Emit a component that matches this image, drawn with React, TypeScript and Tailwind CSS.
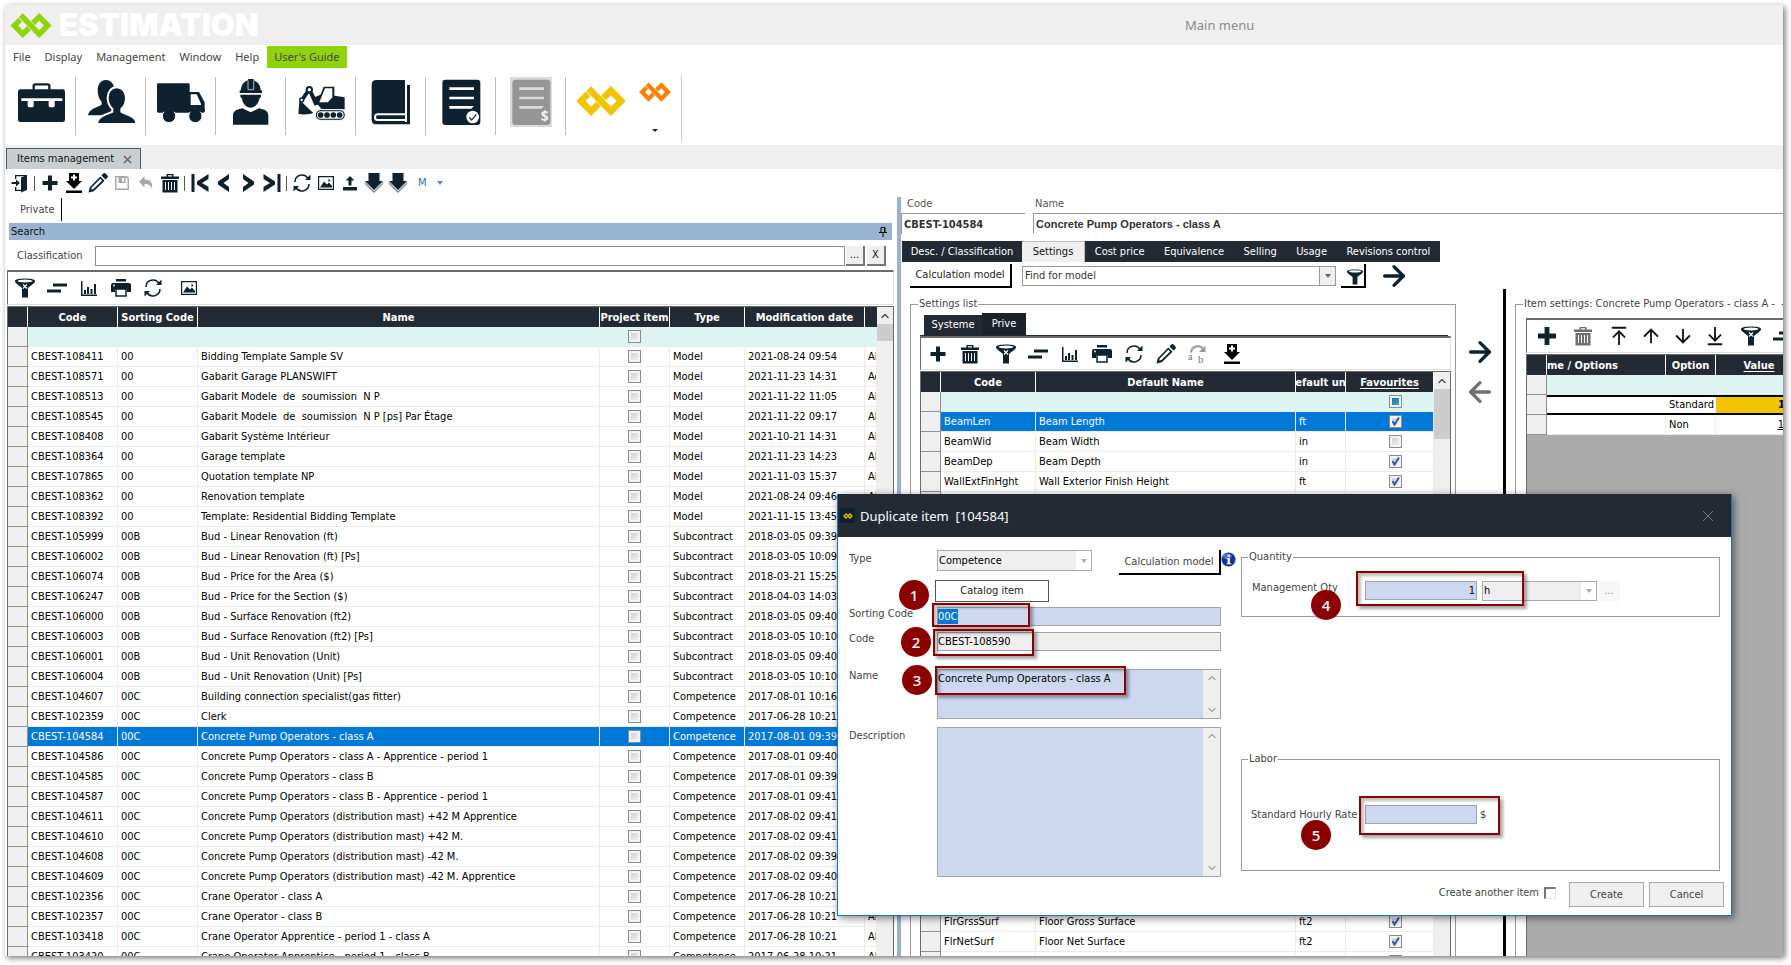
import React, { ReactNode } from 'react'
import { ArrowDown, ArrowDownToLine, ArrowLeft, ArrowRight, ArrowUp, ArrowUpToLine, ChevronDown, ChevronUp } from 'lucide-react'

const INK = '#0d222e'

type Row = [code: string, sorting: string, name: string, type: string, modified: string]

const items: Row[] = [
  ['CBEST-108411', '00', 'Bidding Template Sample SV', 'Model', '2021-08-24 09:54'],
  ['CBEST-108571', '00', 'Gabarit Garage PLANSWIFT', 'Model', '2021-11-23 14:31'],
  ['CBEST-108513', '00', 'Gabarit Modele  de  soumission  N P', 'Model', '2021-11-22 11:05'],
  ['CBEST-108545', '00', 'Gabarit Modele  de  soumission  N P [ps] Par Étage', 'Model', '2021-11-22 09:17'],
  ['CBEST-108408', '00', 'Gabarit Système Intérieur', 'Model', '2021-10-21 14:31'],
  ['CBEST-108364', '00', 'Garage template', 'Model', '2021-11-23 14:23'],
  ['CBEST-107865', '00', 'Quotation template NP', 'Model', '2021-11-03 15:37'],
  ['CBEST-108362', '00', 'Renovation template', 'Model', '2021-08-24 09:46'],
  ['CBEST-108392', '00', 'Template: Residential Bidding Template', 'Model', '2021-11-15 13:45'],
  ['CBEST-105999', '00B', 'Bud - Linear Renovation (ft)', 'Subcontract', '2018-03-05 09:39'],
  ['CBEST-106002', '00B', 'Bud - Linear Renovation (ft) [Ps]', 'Subcontract', '2018-03-05 10:09'],
  ['CBEST-106074', '00B', 'Bud - Price for the Area ($)', 'Subcontract', '2018-03-21 15:25'],
  ['CBEST-106247', '00B', 'Bud - Price for the Section ($)', 'Subcontract', '2018-04-03 14:03'],
  ['CBEST-106000', '00B', 'Bud - Surface Renovation (ft2)', 'Subcontract', '2018-03-05 09:40'],
  ['CBEST-106003', '00B', 'Bud - Surface Renovation (ft2) [Ps]', 'Subcontract', '2018-03-05 10:10'],
  ['CBEST-106001', '00B', 'Bud - Unit Renovation (Unit)', 'Subcontract', '2018-03-05 09:40'],
  ['CBEST-106004', '00B', 'Bud - Unit Renovation (Unit) [Ps]', 'Subcontract', '2018-03-05 10:10'],
  ['CBEST-104607', '00C', 'Building connection specialist(gas fitter)', 'Competence', '2017-08-01 10:16'],
  ['CBEST-102359', '00C', 'Clerk', 'Competence', '2017-06-28 10:21'],
  ['CBEST-104584', '00C', 'Concrete Pump Operators - class A', 'Competence', '2017-08-01 09:39'],
  ['CBEST-104586', '00C', 'Concrete Pump Operators - class A - Apprentice - period 1', 'Competence', '2017-08-01 09:40'],
  ['CBEST-104585', '00C', 'Concrete Pump Operators - class B', 'Competence', '2017-08-01 09:39'],
  ['CBEST-104587', '00C', 'Concrete Pump Operators - class B - Apprentice - period 1', 'Competence', '2017-08-01 09:41'],
  ['CBEST-104611', '00C', 'Concrete Pump Operators (distribution mast) +42 M Apprentice', 'Competence', '2017-08-02 09:41'],
  ['CBEST-104610', '00C', 'Concrete Pump Operators (distribution mast) +42 M.', 'Competence', '2017-08-02 09:41'],
  ['CBEST-104608', '00C', 'Concrete Pump Operators (distribution mast) -42 M.', 'Competence', '2017-08-02 09:39'],
  ['CBEST-104609', '00C', 'Concrete Pump Operators (distribution mast) -42 M. Apprentice', 'Competence', '2017-08-02 09:40'],
  ['CBEST-102356', '00C', 'Crane Operator - class A', 'Competence', '2017-06-28 10:21'],
  ['CBEST-102357', '00C', 'Crane Operator - class B', 'Competence', '2017-06-28 10:21'],
  ['CBEST-103418', '00C', 'Crane Operator Apprentice - period 1 - class A', 'Competence', '2017-06-28 10:21'],
  ['CBEST-103420', '00C', 'Crane Operator Apprentice - period 1 - class B', 'Competence', '2017-06-28 10:21'],
]

type Setting = { code: string; name: string; unit: string; fav: boolean }

const blank: Setting = { code: '', name: '', unit: '', fav: false }

const settings: Setting[] = [
  { code: 'BeamLen', name: 'Beam Length', unit: 'ft', fav: true },
  { code: 'BeamWid', name: 'Beam Width', unit: 'in', fav: false },
  { code: 'BeamDep', name: 'Beam Depth', unit: 'in', fav: true },
  { code: 'WallExtFinHght', name: 'Wall Exterior Finish Height', unit: 'ft', fav: true },
  ...Array.from({ length: 21 }, () => blank),
  { code: 'FlrGrssSurf', name: 'Floor Gross Surface', unit: 'ft2', fav: true },
  { code: 'FlrNetSurf', name: 'Floor Net Surface', unit: 'ft2', fav: true },
  blank,
]

/* ---------- Icons ---------- */

function Mark({ color, className }: { color: string; className: string }) {
  return (
    <svg viewBox="0 0 150 91" className={className} fill="none" stroke={color} strokeWidth="20">
      <path d="M36 24 L14 45.500 L45 77 L67.500 54.500" />
      <path d="M38 8 L105 77 L136 45.500 L105 14 L82.500 36.500" />
    </svg>
  )
}

function Svg({ children, size = 'size-5' }: { children: ReactNode; size?: string }) {
  return (
    <svg viewBox="0 0 20 20" className={`${size} shrink-0`} fill={INK} stroke="none">
      {children}
    </svg>
  )
}

const PlusIcon = ({ size }: { size?: string }) => <Svg size={size}><path d="M8 2.500h4V8h5.500v4H12v5.500H8V12H2.500V8H8z" /></Svg>

const DownloadIcon = () => (
  <Svg>
    <path fill="#000" d="M5 0h10v8h3l-8 8-8-8h3zM2 17.500h16V20H2z" />
    <path fill="#fff" d="M9 1.500h2v2h2v2h-2v2H9v-2H7v-2h2z" />
  </Svg>
)

const PencilIcon = () => (
  <Svg>
    <path fillRule="evenodd" d="M15 .8a2 2 0 0 1 2.800 0l1.400 1.400a2 2 0 0 1 0 2.800l-1.600 1.600-4.200-4.200zM12.300 3.500l4.200 4.200L5.800 18.200.5 19.500l1.300-5.300zM12.300 5.800l-8.600 8.600-.5 2.200 2.300-.5 8.600-8.600z" />
  </Svg>
)

const SaveIcon = () => (
  <Svg>
    <path fill="#a8a8a8" fillRule="evenodd" d="M3 3h12l2 2v12H3zm1.500 1.500v11h11V6l-1-1.500h-1V10h-7V4.500zM10 5h2v3.500h-2z" />
  </Svg>
)

const UndoIcon = () => (
  <Svg><path fill="#a8a8a8" d="M8.500 3v3.500c6 0 8.500 3 7.500 9.500-1-3.500-3-5-7.500-5v3.500L3 8.800z" /></Svg>
)

const TrashIcon = ({ color = INK }: { color?: string }) => (
  <Svg>
    <path fill={color} fillRule="evenodd" d="M6.500 1h7v2.500H19V6H1V3.500h5.500zM8 2.300v1.200h4V2.300zM2.500 7h15v12.500h-15zM5 9v8h1V9zm3 0v8h1V9zm3 0v8h1V9zm3 0v8h1V9z" />
  </Svg>
)

const FunnelIcon = ({ mark = true, size }: { mark?: boolean; size?: string }) => (
  <Svg size={size}>
    <path d="M0 3c0-3.200 20-3.200 20 0 0 2.500-4 4-7 7v9.500H7V10C4 7 0 5.500 0 3z" />
    <ellipse cx="10" cy="3" rx="7.500" ry="1.400" fill="#fff" />
    {mark && <path d="M8 6.500l4 4M12 6.500l-4 4" stroke="#fff" strokeWidth="1.100" />}
  </Svg>
)

const LinesIcon = () => <Svg><path d="M6 5.500h14v3H6zM0 11.500h14v3H0z" /></Svg>

const ChartIcon = () => (
  <Svg>
    <path d="M2 3h1.500v13.500H18V18H2zM5 12h2v4H5zM8 9h2v7H8zM11.500 11h2v5h-2zM15 6h2v10h-2z" />
  </Svg>
)

const PrintIcon = () => (
  <Svg>
    <path d="M5 1h10v2.500H5zM2 5h16a2 2 0 0 1 2 2v7h-4v-3H4v3H0V7a2 2 0 0 1 2-2z" />
    <path fill="#fff" stroke={INK} strokeWidth="1.500" d="M5 11h10v7H5z" />
    <circle cx="3" cy="7.500" r=".9" fill="#fff" />
  </Svg>
)

const RefreshIcon = () => (
  <Svg>
    <g fill="none" stroke={INK} strokeWidth="1.500">
      <path d="M3 9a7 7 0 0 1 13-3.500M17 11a7 7 0 0 1-13 3.500" />
    </g>
    <path d="M18.500 1.500v5.500H13zM1.500 18.500V13H7z" />
  </Svg>
)

const ImageIcon = () => (
  <Svg>
    <path fillRule="evenodd" d="M2 3h16v14H2zm1.200 1.200v11.600h13.600V4.200z" />
    <path d="M4 14.500l4-6 3 3 2-2 3 3.500v1.500zM12.500 5.500l2 2-2 1.500z" />
  </Svg>
)

const DoorIcon = () => (
  <Svg>
    <path d="M11 4.500l6-2.500v15l-6 2.500z" />
    <path d="M5 2h12v1.300H6.300V6H5zM5 14h1.300v2.700H11V18H5z" />
    <path d="M1.500 9H6V6.500l4 3.500-4 3.500V11H1.500z" />
  </Svg>
)

const UploadIcon = () => (
  <Svg><path d="M10 3l4.500 4.500h-3v5h-3v-5h-3zM3 14h14v3.500H3z" /></Svg>
)

const BlockArrowIcon = () => (
  <Svg>
    <path d="M4.500 0h11v8H19l-9 9-9-9h3.500z" />
    <path d="M1 11l9 9 9-9v-2l-9 9-9-9z" fill="#7d8a92" />
  </Svg>
)

const SwapIcon = () => (
  <Svg>
    <path d="M3 8.500C4 1.500 12 .5 15 5" fill="none" stroke="#999" strokeWidth="2" />
    <path d="M17.500 1.500v6.500H11z" fill="#999" />
    <text x="0" y="16" fontSize="10" fill="#777" style={{ fontFamily: 'Liberation Serif, serif' }}>a</text>
    <text x="10" y="19" fontSize="11" fill="#777" style={{ fontFamily: 'Liberation Serif, serif' }}>b</text>
  </Svg>
)

function Step({ dir, bar }: { dir: 'left' | 'right'; bar?: boolean }) {
  return (
    <Svg>
      {dir === 'left' ? (
        <path d={bar ? 'M18.500 1v5L12 10l6.500 4v5L7 11.500v-3zM1.500 1h3v18h-3z' : 'M15 1v5l-5.500 4 5.500 4v5L4 11.500v-3z'} />
      ) : (
        <path d={bar ? 'M1.500 1v5L8 10l-6.500 4v5L13 11.500v-3zM15.500 1h3v18h-3z' : 'M5 1v5l5.500 4L5 14v5l11-7.500v-3z'} />
      )}
    </Svg>
  )
}

function Big({ children }: { children: ReactNode }) {
  return <svg viewBox="0 0 150 150" className="size-[50px]" fill={INK}>{children}</svg>
}

const ToolboxIcon = () => (
  <Big>
    <path d="M56 38V27q0-5 5-5h37q5 0 5 5v11" fill="none" stroke={INK} strokeWidth="7" />
    <rect x="9" y="37" width="141" height="98" rx="7" />
    <path fill="#fff" d="M19 64h123v8h-23v14q0 5-5 5h-8q-5 0-5-5V72H56v14q0 5-5 5h-8q-5 0-5-5V72H19z" />
  </Big>
)

const UsersIcon = () => (
  <Big>
    <path d="M63 9c16 0 25 14 25 30 0 14-6 24-12 30v8l12 38H9c2-20 30-24 41-32v-8c-7-8-12-20-12-36C38 23 47 9 63 9z" />
    <path stroke="#fff" strokeWidth="6" d="M95 31c17 0 28 14 28 32 0 15-7 27-14 33v8c10 8 44 10 46 37H36c2-27 36-30 46-37v-8c-8-8-14-19-14-33 0-18 10-32 27-32z" />
  </Big>
)

const TruckIcon = () => (
  <Big>
    <path d="M10 19h90q4 0 4 4v22h28l17 31v27q0 4-4 4H10q-4 0-4-4V23q0-4 4-4z" />
    <path fill="#fff" d="M107 52h18l13 28v4h-31z" />
    <g stroke="#fff" strokeWidth="3">
      <circle cx="42" cy="117" r="20" />
      <circle cx="121" cy="117" r="20" />
    </g>
    <path d="M10 96h139v8H10z" />
  </Big>
)

const WorkerIcon = () => (
  <Big>
    <path d="M48 40c0-15 8-26 21-30V6h17v4c13 4 21 15 21 30h4v8H44v-8z" />
    <path d="M69 10v28h17V10" fill="none" stroke="#fff" strokeWidth="2" />
    <path d="M46 53h62v6l-5 6c-2 14-13 27-26 27S53 79 51 65l-5-6z" />
    <path d="M24 143v-28c0-13 12-18 28-21l25 12 25-12c16 3 28 8 28 21v28z" />
  </Big>
)

const ExcavatorIcon = () => (
  <Big>
    <path d="M13 74l8 2 34 32c-8 4-32 6-45 2z" />
    <path d="M20 70L43 37" stroke={INK} strokeWidth="11" />
    <path d="M47 34l14 26 22-10-8 30-16 6-20-44z" />
    <circle cx="43" cy="38" r="11" />
    <circle cx="43" cy="38" r="5" fill="#fff" />
    <circle cx="20" cy="69" r="8" />
    <circle cx="20" cy="69" r="3.500" fill="#fff" />
    <path d="M86 29h32v27l31 5v36H80L66 80z" />
    <path fill="#fff" d="M90 34h22v27l-13 15H73z" />
    <rect x="61" y="98" width="90" height="32" rx="16" stroke="#fff" strokeWidth="3" />
    <rect x="66" y="103" width="80" height="22" rx="11" fill="#fff" />
    <circle cx="77" cy="114" r="8.500" />
    <circle cx="96" cy="114" r="8.500" />
    <circle cx="115" cy="114" r="8.500" />
    <circle cx="134" cy="114" r="8.500" />
  </Big>
)

const BookIcon = () => (
  <Big>
    <path d="M34 9h86v133H34q-14 0-14-14V23Q20 9 34 9zM126 24h9v118h-15v-7h6z" />
    <path d="M122 112H38q-8 0-8 8.500t8 8.500h84" fill="none" stroke="#fff" strokeWidth="6" />
  </Big>
)

const SheetIcon = () => (
  <Big>
    <rect x="22" y="8" width="114" height="136" rx="9" />
    <path fill="#fff" d="M43 31h74v8H43zM43 59h74v8H43zM43 87h74l-8 8H43z" />
    <circle cx="113" cy="120" r="19" fill="#fff" />
    <path d="M103 121l7 8 14-17" fill="none" stroke={INK} strokeWidth="3.500" />
  </Big>
)

const PriceSheetIcon = () => (
  <Big>
    <rect width="126" height="150" x="15" fill="#dadada" />
    <rect x="22" y="8" width="114" height="136" rx="9" fill="#959595" />
    <path fill="#dadada" d="M43 31h74v8H43zM43 59h74v8H43zM43 87h74l-8 8H43z" />
    <text x="107" y="132" fontSize="42" fontWeight="bold" fill="#eee" fontFamily="Noto Sans, sans-serif">$</text>
  </Big>
)

/* ---------- Shared pieces ---------- */

function IconButton({ label, children, className = 'w-8' }: { label: string; children: ReactNode; className?: string }) {
  return (
    <button type="button" aria-label={label} className={`flex shrink-0 items-center justify-center ${className}`}>
      {children}
    </button>
  )
}

function Check({ label, checked = false }: { label: string; checked?: boolean }) {
  return (
    <span className="relative mx-auto block size-[13px]">
      <input
        type="checkbox"
        aria-label={label}
        defaultChecked={checked}
        className="block size-[13px] appearance-none border border-[#8b8b8b] bg-linear-to-br from-[#c4cad4] to-[#f8f8f8] shadow-[inset_0_0_0_2px_#f4f4f4]"
      />
      {checked && (
        <svg viewBox="0 0 13 13" className="pointer-events-none absolute inset-0" fill="none" stroke="#3c569c" strokeWidth="2">
          <path d="M3.500 6l2 3.500L10 2.500" />
        </svg>
      )}
    </span>
  )
}

function Scrollbar({ thumb }: { thumb: string }) {
  return (
    <div className="flex w-4 shrink-0 flex-col bg-[#efefef]">
      <div className="flex h-[17px] items-center justify-center">
        <ChevronUp className="size-3 text-[#555]" strokeWidth={3} />
      </div>
      <div className={`bg-[#cdcdcd] ${thumb}`} />
    </div>
  )
}

const th = 'h-5 overflow-hidden border-r border-white bg-[#232a34] p-0 pt-0.5 text-white'
const td = 'h-5 overflow-hidden border-r border-b border-[#ececec] p-0 pl-[3px] whitespace-pre'
const rowHead = 'h-5 border-r border-b border-[#8f8f8f] bg-[#efefef] p-0'
const filterCell = 'h-5 border-b border-[#ececec] bg-[#def4f3] p-0'
const toolStrip = 'flex shrink-0 items-center border-t-2 border-r border-b border-l border-t-[#6b6b6b] border-r-[#dedede] border-b-[#dedede] border-l-[#6b6b6b]'

function Head({ children, underline }: { children?: ReactNode; underline?: boolean }) {
  return (
    <th scope="col" className={th}>
      <div className="flex justify-center overflow-hidden whitespace-nowrap">
        <span className={`shrink-0 ${underline ? 'underline underline-offset-2' : ''}`}>{children}</span>
      </div>
    </th>
  )
}

/* ---------- Top of the window ---------- */

function Header() {
  const tools = [
    { label: 'Projects', icon: <ToolboxIcon /> },
    { label: 'Contacts', icon: <UsersIcon /> },
    { label: 'Suppliers', icon: <TruckIcon /> },
    { label: 'Labor', icon: <WorkerIcon /> },
    { label: 'Equipment', icon: <ExcavatorIcon /> },
    { label: 'Catalog', icon: <BookIcon /> },
    { label: 'Bids', icon: <SheetIcon /> },
    { label: 'Price list', icon: <PriceSheetIcon /> },
  ]
  return (
    <header className="shrink-0">
      <div className="grid h-10 grid-cols-[1180px_1fr] items-center bg-[#efefef]">
        <div className="flex items-center gap-[7px] pl-[5px]">
          <Mark color="#8fd30d" className="h-[25px] w-[42px]" />
          <span className="font-[Inter,sans-serif] text-[31px] leading-8 font-black text-white">ESTIMATION</span>
        </div>
        <span className="font-['Noto_Sans',sans-serif] text-[13px] text-[#8c8c8c]">Main menu</span>
      </div>

      <nav className="flex h-[30px] items-start gap-3.5 pt-px pl-2 font-['Noto_Sans',sans-serif] text-[11px] leading-[22px] text-[#444]">
        <button type="button">File</button>
        <button type="button">Display</button>
        <button type="button">Management</button>
        <button type="button">Window</button>
        <button type="button">Help</button>
        <button type="button" className="-ml-1.5 bg-[#8fd30d] px-[7px]">User's Guide</button>
      </nav>

      <div className="flex h-[70px] items-start pl-px">
        {tools.map((t) => (
          <button key={t.label} type="button" aria-label={t.label} className="mt-0.5 flex h-[58px] w-[70px] justify-center border-r border-[#bdbdbd] pr-0.5">
            {t.icon}
          </button>
        ))}
        <div className="flex h-[67px] w-[116px] border-r border-[#cfcfcf]">
          <button type="button" aria-label="Estimation" className="mt-[11px] ml-2.5 h-[30px]">
            <Mark color="#f0c400" className="h-[30px] w-[50px]" />
          </button>
          <button type="button" aria-label="More modules" className="mt-[7px] ml-[13px] flex flex-col items-center justify-between pb-2.5">
            <Mark color="#ff8000" className="h-5 w-8" />
            <span className="size-0 border-x-[3px] border-t-[3px] border-x-transparent border-t-[#222]" />
          </button>
        </div>
      </div>

      <div className="flex h-6 items-end bg-[#efefef] pl-px">
        <div className="flex h-[21px] w-[135px] items-center justify-between border border-b-0 border-[#465a66] bg-[#c9cfd0] pr-2 pl-2.5 text-[#111]">
          Items management
          <button type="button" aria-label="Close tab" className="text-[#666]">
            <svg viewBox="0 0 9 9" className="size-[9px]" stroke="currentColor" strokeWidth="1.500"><path d="M1 1l7 7M8 1l-7 7" /></svg>
          </button>
        </div>
      </div>

      <div className="flex h-[28px] items-center pl-[3px]">
        <IconButton label="Exit" className="w-6"><DoorIcon /></IconButton>
        <Divider />
        <IconButton label="Add" className="w-6"><PlusIcon /></IconButton>
        <IconButton label="Import" className="w-6"><DownloadIcon /></IconButton>
        <IconButton label="Edit" className="w-6"><PencilIcon /></IconButton>
        <IconButton label="Save" className="w-6"><SaveIcon /></IconButton>
        <IconButton label="Undo" className="w-6"><UndoIcon /></IconButton>
        <IconButton label="Delete" className="w-6"><TrashIcon /></IconButton>
        <Divider />
        <IconButton label="First" className="w-6"><Step dir="left" bar /></IconButton>
        <IconButton label="Previous" className="w-6"><Step dir="left" /></IconButton>
        <IconButton label="Next" className="w-6"><Step dir="right" /></IconButton>
        <IconButton label="Last" className="w-6"><Step dir="right" bar /></IconButton>
        <Divider />
        <IconButton label="Refresh" className="w-6"><RefreshIcon /></IconButton>
        <IconButton label="Picture" className="w-6"><ImageIcon /></IconButton>
        <IconButton label="Export" className="w-6"><UploadIcon /></IconButton>
        <IconButton label="Move down" className="w-6"><BlockArrowIcon /></IconButton>
        <IconButton label="Move to end" className="w-6"><BlockArrowIcon /></IconButton>
        <button type="button" className="ml-2 flex items-center gap-2.5 text-[#3b68ad]">
          M
          <span className="size-0 border-x-[3px] border-t-[4px] border-x-transparent border-t-[#5b85c4]" />
        </button>
      </div>
    </header>
  )
}

const Divider = () => <span className="mr-[3px] ml-0.5 h-[15px] w-px bg-[#555]" />

/* ---------- Left: items grid ---------- */

function ItemsPanel() {
  return (
    <section className="flex w-1/2 shrink-0 flex-col">
      <div className="flex h-[26px] items-start pt-px">
        <button type="button" className="h-[23px] border-r border-black pr-[7px] pl-[15px] text-[#444]">Private</button>
      </div>
      <div className="mr-0.5 ml-1 flex h-[17px] items-center justify-between bg-[#9ab3d2] pr-[5px] pl-0.5 text-[#111]">
        Search
        <svg viewBox="0 0 8 10" className="h-2.5 w-2" fill="none" stroke="#000" strokeWidth="1">
          <path d="M2 .5h4v5M2 .5v5M5.500 .5v5M0 5.500h8M4 5.500V10" />
        </svg>
      </div>
      <div className="flex h-[30px] items-center pt-0.5 pr-2 pl-3">
        <label htmlFor="classification" className="w-[78px] text-[#444]">Classification</label>
        <input id="classification" className="h-5 min-w-0 flex-1 border border-[#8f8f8f] bg-white px-1 outline-none" />
        <button type="button" className="ml-px h-5 w-[19px] border-r-2 border-b-2 border-[#777] bg-[#efefef] text-[#111]">...</button>
        <button type="button" className="ml-0.5 h-5 w-[19px] border-r-2 border-b-2 border-[#777] bg-[#efefef] text-[#111]">X</button>
      </div>

      <div className={`${toolStrip} ml-0.5 h-[35px] pl-px`}>
        <IconButton label="Clear filter"><FunnelIcon /></IconButton>
        <IconButton label="Group"><LinesIcon /></IconButton>
        <IconButton label="Chart"><ChartIcon /></IconButton>
        <IconButton label="Print"><PrintIcon /></IconButton>
        <IconButton label="Refresh list"><RefreshIcon /></IconButton>
        <IconButton label="Show picture" className="ml-1 w-8"><ImageIcon /></IconButton>
      </div>

      <div className="mt-px ml-0.5 flex min-h-0 flex-1 overflow-hidden border-t border-r border-l border-[#6b6b6b]">
        <div className="min-w-0 flex-1 overflow-hidden">
          <table className="w-full table-fixed border-separate border-spacing-0 text-black">
            <colgroup>
              <col className="w-5" />
              <col className="w-[90px]" />
              <col className="w-20" />
              <col />
              <col className="w-[70px]" />
              <col className="w-[75px]" />
              <col className="w-[120px]" />
              <col className="w-3" />
            </colgroup>
            <thead>
              <tr>
                <Head />
                <Head>Code</Head>
                <Head>Sorting Code</Head>
                <Head>Name</Head>
                <Head>Project item</Head>
                <Head>Type</Head>
                <Head>Modification date</Head>
                <th className="bg-[#232a34]" />
              </tr>
            </thead>
            <tbody>
              <tr>
                <td className={rowHead} />
                <td colSpan={3} className={filterCell} />
                <td className={`${filterCell} pr-px`}><Check label="Filter project items" /></td>
                <td colSpan={3} className={filterCell} />
              </tr>
              {items.map(([code, sorting, name, type, modified], i) => {
                const on = code === 'CBEST-104584'
                const cell = on ? `${td} bg-[#0078d7] text-white` : td
                return (
                  <tr key={code}>
                    <td className={rowHead} />
                    <td className={cell}>{code}</td>
                    <td className={cell}>{sorting}</td>
                    <td className={cell}>{name}</td>
                    <td className={`${cell} pr-[3px]`}><Check label={`Project item ${code}`} /></td>
                    <td className={cell}>{type}</td>
                    <td className={cell}>{modified}</td>
                    <td className={cell}>{i === 1 ? 'Ac' : 'Al'}</td>
                  </tr>
                )
              })}
            </tbody>
          </table>
        </div>
        <Scrollbar thumb="h-[17px]" />
      </div>
    </section>
  )
}

/* ---------- Right: item details ---------- */

function SettingsGrid() {
  return (
    <div className="mt-px flex min-h-0 flex-1 overflow-hidden border-t border-r border-l border-[#6b6b6b]">
      <div className="min-w-0 flex-1">
        <table className="w-full table-fixed border-separate border-spacing-0 text-black">
          <colgroup>
            <col className="w-5" />
            <col className="w-[95px]" />
            <col />
            <col className="w-[50px]" />
            <col className="w-[88px]" />
          </colgroup>
          <thead>
            <tr>
              <Head />
              <Head>Code</Head>
              <Head>Default Name</Head>
              <Head>Default unit</Head>
              <Head underline>Favourites</Head>
            </tr>
          </thead>
          <tbody>
            <tr>
              <td className={rowHead} />
              <td colSpan={3} className={filterCell} />
              <td className={filterCell}>
                <input
                  type="checkbox"
                  aria-label="Filter favourites"
                  className="ml-[43px] block size-[13px] appearance-none border border-[#8b8b8b] bg-linear-to-br from-[#1a6d9c] to-[#3bb0dc] shadow-[inset_0_0_0_2px_#f4f4f4]"
                />
              </td>
            </tr>
            {settings.map((s, i) => {
              const cell = i === 0 ? `${td} bg-[#0078d7] text-white` : td
              return (
                <tr key={i}>
                  <td className={rowHead} />
                  <td className={cell}>{s.code}</td>
                  <td className={cell}>{s.name}</td>
                  <td className={cell}>{s.unit}</td>
                  <td className={`${cell} pl-[11px]`}><Check label={`Favourite ${s.code}`} checked={s.fav} /></td>
                </tr>
              )
            })}
          </tbody>
        </table>
      </div>
      <Scrollbar thumb="h-[50px]" />
    </div>
  )
}

function ItemSettingsGrid() {
  return (
    <div className="mt-px flex-1 border-t border-l border-[#6b6b6b] bg-[#ababab]">
      <table className="w-full table-fixed border-separate border-spacing-0 bg-white text-black">
        <colgroup>
          <col className="w-5" />
          <col className="w-[119px]" />
          <col className="w-[50px]" />
          <col />
        </colgroup>
        <thead>
          <tr>
            <Head />
            <th scope="col" className={`${th} text-left whitespace-nowrap`}>me / Options</th>
            <Head>Option</Head>
            <Head underline>Value</Head>
          </tr>
        </thead>
        <tbody>
          <tr>
            <td className={rowHead} />
            <td colSpan={3} className={filterCell} />
          </tr>
          <tr>
            <td className={rowHead} />
            <td className="border-y-2 border-black p-0" />
            <td className="border-y-2 border-black p-0 pl-[3px]">Standard</td>
            <td className="border-y-2 border-black bg-[#f0c400] p-0 pr-[18px] text-right font-bold">1</td>
          </tr>
          <tr>
            <td className={rowHead} />
            <td className={td} />
            <td className={td}>Non</td>
            <td className={`${td} pr-[18px] text-right underline`}>1</td>
          </tr>
        </tbody>
      </table>
    </div>
  )
}

function DetailPanel() {
  const tabs = ['Cost price', 'Equivalence', 'Selling', 'Usage', 'Revisions control']
  const field = 'h-[21px] w-full border-t border-l border-[#9a9a9a] bg-white pl-0.5 font-bold text-[#333] outline-none'
  return (
    <section className="ml-[3px] flex min-w-0 flex-1 flex-col overflow-hidden border-l-4 border-[#9ab3d2]">
      <div className="flex gap-2 text-[#555]">
        <label className="block w-[124px] shrink-0">
          <span className="block h-4 pl-1.5">Code</span>
          <input className={field} defaultValue="CBEST-104584" />
        </label>
        <label className="block flex-1">
          <span className="block h-4 pl-0.5">Name</span>
          <input className={`${field} font-['Liberation_Sans',sans-serif]`} defaultValue="Concrete Pump Operators - class A" />
        </label>
      </div>

      <div className="mt-[7px] ml-px flex h-[21px] w-[538px] shrink-0 bg-[#232a34] text-white">
        <button type="button" className="w-[120px] shrink-0">Desc. / Classification</button>
        <button type="button" className="w-[63px] shrink-0 border-t border-r border-[#bbb] bg-[#efefef] text-[#111]">Settings</button>
        {tabs.map((t) => (
          <button key={t} type="button" className="flex-auto whitespace-nowrap">{t}</button>
        ))}
      </div>

      <div className="flex h-[27px] shrink-0 items-center pt-px pl-[9px]">
        <button type="button" className="h-6 w-[102px] border-r-2 border-b-2 border-black text-[#222]">Calculation model</button>
        <div className="relative ml-2.5">
          <select aria-label="Model" className="block h-5 w-[314px] appearance-none border border-[#9a9a9a] bg-white pl-0.5 text-[#333]">
            <option>Find for model</option>
          </select>
          <span className="pointer-events-none absolute inset-y-px right-px flex w-4 items-center justify-center border-l border-[#9a9a9a] bg-[#efefef]">
            <span className="size-0 border-x-[3px] border-t-[4px] border-x-transparent border-t-[#666]" />
          </span>
        </div>
        <IconButton label="Filter model" className="ml-[5px] h-6 w-[25px] border-r-2 border-b-2 border-black pt-1 pl-1"><FunnelIcon mark={false} size="size-4" /></IconButton>
        <IconButton label="Apply model" className="ml-3 w-8"><ArrowRight className="size-8" color={INK} strokeWidth={2.500} /></IconButton>
      </div>

      <div className="flex min-h-0 flex-1 overflow-hidden">
        <fieldset className="mt-2 ml-[9px] flex w-[546px] shrink-0 flex-col border border-b-0 border-[#9a9a9a] pr-1 pl-[9px]">
          <legend className="-ml-0.5 px-px text-[#444]">Settings list</legend>
          <div className="mt-0.5 mr-[3px] flex items-end border-b border-[#232a34] pl-1 text-white">
            <button type="button" className="h-5 w-[58px] bg-[#232a34]">Systeme</button>
            <button type="button" className="h-[22px] w-11 bg-[#1c222b]">Prive</button>
          </div>
          <div className={`${toolStrip} h-[34px] pl-px`}>
            <IconButton label="Add setting"><PlusIcon /></IconButton>
            <IconButton label="Delete setting"><TrashIcon /></IconButton>
            <IconButton label="Clear settings filter" className="ml-1 w-8"><FunnelIcon /></IconButton>
            <IconButton label="Group settings"><LinesIcon /></IconButton>
            <IconButton label="Chart settings"><ChartIcon /></IconButton>
            <IconButton label="Print settings"><PrintIcon /></IconButton>
            <IconButton label="Refresh settings"><RefreshIcon /></IconButton>
            <IconButton label="Edit setting"><PencilIcon /></IconButton>
            <IconButton label="Rename setting"><SwapIcon /></IconButton>
            <IconButton label="Import settings" className="ml-0.5 w-8"><DownloadIcon /></IconButton>
          </div>
          <SettingsGrid />
        </fieldset>

        <div className="flex w-[47px] shrink-0 flex-col items-center gap-2 pt-[47px]">
          <IconButton label="Add to item"><ArrowRight className="size-8" color={INK} strokeWidth={2.500} /></IconButton>
          <IconButton label="Remove from item"><ArrowLeft className="size-8" color="#6f6f6f" strokeWidth={2.500} /></IconButton>
        </div>

        <div className="w-[3px] shrink-0 bg-black" />

        <fieldset className="mt-2 ml-[9px] flex w-[288px] shrink-0 grow flex-col border border-r-0 border-b-0 border-[#9a9a9a] pl-2.5">
          <legend className="-ml-[3px] px-px whitespace-pre text-[#444]">{'Item settings: Concrete Pump Operators - class A -  - C'}</legend>
          <div className={`${toolStrip} mt-[7px] h-[35px] pl-1`}>
            <IconButton label="Add item setting"><PlusIcon size="size-6" /></IconButton>
            <IconButton label="Delete item setting" className="ml-1 w-8"><TrashIcon color="#6f6f6f" /></IconButton>
            <IconButton label="Move first" className="ml-1 w-8"><ArrowUpToLine className="size-[22px]" color="#111" strokeWidth={2} /></IconButton>
            <IconButton label="Move up"><ArrowUp className="size-[22px]" color="#111" strokeWidth={2} /></IconButton>
            <IconButton label="Move setting down"><ArrowDown className="size-[22px]" color="#111" strokeWidth={2} /></IconButton>
            <IconButton label="Move last"><ArrowDownToLine className="size-[22px]" color="#111" strokeWidth={2} /></IconButton>
            <IconButton label="Clear item filter" className="ml-1 w-8"><FunnelIcon /></IconButton>
            <IconButton label="Group item settings"><LinesIcon /></IconButton>
          </div>
          <ItemSettingsGrid />
        </fieldset>
      </div>
    </section>
  )
}

/* ---------- Duplicate item dialog ---------- */

function Area({ id, value, height }: { id: string; value?: string; height: string }) {
  return (
    <div className={`flex w-[284px] border border-[#a0a4aa] ${height}`}>
      <textarea id={id} defaultValue={value} className="min-w-0 flex-1 resize-none bg-[#cdd8f0] py-0.5 text-black outline-none" />
      <div className="flex w-[17px] flex-col items-center justify-between bg-[#efefef] py-0.5 text-[#aaa]">
        <ChevronUp className="size-3" strokeWidth={3} />
        <ChevronDown className="size-3" strokeWidth={3} />
      </div>
    </div>
  )
}

const Callout = ({ n, className }: { n: number; className: string }) => (
  <span className={`absolute flex size-[30px] items-center justify-center rounded-full bg-[#8b0000] font-['Noto_Sans',sans-serif] text-[15px] font-medium text-white ${className}`}>
    {n}
  </span>
)

const Frame = ({ className }: { className: string }) => (
  <span className={`pointer-events-none absolute border-2 border-[#8b0000] shadow-[3px_3px_3px_rgba(0,0,0,0.35),inset_3px_3px_3px_rgba(0,0,0,0.25)] ${className}`} />
)

function DuplicateDialog() {
  const lab = 'w-[89px] shrink-0 pl-px'
  return (
    <div role="dialog" aria-label="Duplicate item" className="absolute top-[489px] left-[832px] flex h-[422px] w-[895px] flex-col border border-t-0 border-[#1276c2] bg-white text-[#444] shadow-[2px_2px_8px_rgba(0,0,0,0.5)]">
      <div className="flex h-[43px] shrink-0 items-center bg-[#232a34] pr-[18px] pl-0.5 text-white">
        <span className="flex size-[15px] items-center justify-center bg-[#0d222e]">
          <Mark color="#f0c400" className="h-1.5 w-2.5" />
        </span>
        <h2 className="ml-[5px] flex-1 font-['Noto_Sans',sans-serif] text-[13px] whitespace-pre">{'Duplicate item  [104584]'}</h2>
        <button type="button" aria-label="Close">
          <svg viewBox="0 0 10 10" className="size-2.5" stroke="#777" strokeWidth="1"><path d="M0 0l10 10M10 0L0 10" /></svg>
        </button>
      </div>

      <div className="flex flex-1 justify-between pt-[13px] pr-[11px] pl-2.5">
        <div className="w-[392px]">
          <div className="flex">
            <label htmlFor="type" className={`${lab} pt-0.5`}>Type</label>
            <div className="relative">
              <select id="type" className="block h-[21px] w-[155px] appearance-none border border-[#a5abb2] bg-[#efefef] pl-px text-black">
                <option>Competence</option>
              </select>
              <span className="pointer-events-none absolute top-px right-px flex h-[19px] w-[15px] items-center justify-center bg-white">
                <span className="size-0 border-x-[3px] border-t-[4px] border-x-transparent border-t-[#aaa]" />
              </span>
            </div>
            <button type="button" className="ml-[27px] h-[25px] w-[102px] border-r-2 border-b-2 border-black">Calculation model</button>
            <svg viewBox="0 0 16 16" className="mt-0.5 size-[15px]" aria-label="Information">
              <circle cx="8" cy="8" r="7.500" fill="#1730a8" />
              <ellipse cx="6.500" cy="4.500" rx="5" ry="3" fill="#6f8be0" opacity=".6" />
              <path d="M7 3h2.500v2H7zM6 6.500h3.500V12H11v1H6v-1h1V7.500H6z" fill="#fff" />
            </svg>
          </div>
          <button type="button" className="mt-[5px] ml-[87px] block h-[22px] w-[114px] border border-[#555] bg-white text-[#222]">Catalog item</button>
          <div className="mt-[5px] flex">
            <label htmlFor="sorting" className={lab}>Sorting Code</label>
            <div className="flex h-[19px] w-[284px] items-center border border-[#a0a4aa] bg-[#cdd8f0]">
              <input id="sorting" defaultValue="00C" className="h-[15px] w-5 bg-[#0078d7] text-white outline-none" />
            </div>
          </div>
          <div className="mt-1.5 flex">
            <label htmlFor="code" className={lab}>Code</label>
            <input id="code" defaultValue="CBEST-108590" className="h-[19px] w-[284px] border border-[#a0a4aa] bg-[#efefef] text-black outline-none" />
          </div>
          <div className="mt-[18px] flex">
            <label htmlFor="name" className={lab}>Name</label>
            <Area id="name" value="Concrete Pump Operators - class A" height="h-[50px]" />
          </div>
          <div className="mt-2 flex">
            <label htmlFor="description" className={`${lab} pt-0.5`}>Description</label>
            <Area id="description" height="h-[150px]" />
          </div>
        </div>

        <div className="flex w-[479px] flex-col">
          <fieldset className="h-[67px] border border-[#9a9a9a] pl-2.5">
            <legend className="-ml-1 px-px">Quantity</legend>
            <div className="flex items-start pt-[17px]">
              <label htmlFor="qty" className="w-[113px]">Management Qty</label>
              <input id="qty" defaultValue="1" className="h-[19px] w-28 border border-[#a0a4aa] bg-[#cdd8f0] px-px text-right text-black outline-none" />
              <div className="relative ml-[5px]">
                <select aria-label="Unit" className="block h-5 w-[115px] appearance-none border border-[#a5abb2] bg-[#efefef] pl-px text-black">
                  <option>h</option>
                </select>
                <span className="pointer-events-none absolute inset-y-px right-px flex w-[15px] items-center justify-center bg-white">
                  <span className="size-0 border-x-[3px] border-t-[4px] border-x-transparent border-t-[#aaa]" />
                </span>
              </div>
              <button type="button" className="ml-px h-5 w-[22px] bg-[#f7f7f7] text-[#999]">...</button>
            </div>
          </fieldset>
          <fieldset className="mt-[135px] h-[119px] border border-[#9a9a9a] pl-[9px]">
            <legend className="-ml-[3px] px-px">Labor</legend>
            <div className="flex items-center pt-[39px]">
              <label htmlFor="rate" className="w-[114px]">Standard Hourly Rate</label>
              <input id="rate" className="h-[19px] w-28 border border-[#a0a4aa] bg-[#cdd8f0] outline-none" />
              <span className="ml-[3px]">$</span>
            </div>
          </fieldset>
        </div>
      </div>

      <div className="flex h-[33px] items-start justify-end gap-[5px] pr-[7px]">
        <label className="mt-1 mr-2 flex items-center gap-[5px]">
          Create another item
          <input type="checkbox" className="block size-3 appearance-none border border-t-2 border-l-2 border-[#e3e3e3] border-t-[#777] border-l-[#777] bg-white" />
        </label>
        <button type="button" className="h-[25px] w-[75px] border border-[#a9a9a9] bg-[#efefef]">Create</button>
        <button type="button" className="h-[25px] w-[75px] border border-[#a9a9a9] bg-[#efefef]">Cancel</button>
      </div>

      <Frame className="top-[109px] left-[94px] h-6 w-[98px]" />
      <Frame className="top-[135px] left-[95px] h-[27px] w-[101px]" />
      <Frame className="top-[172px] left-[97px] h-[29px] w-[191px]" />
      <Frame className="top-[77px] left-[518px] h-[35px] w-[168px]" />
      <Frame className="top-[302px] left-[521px] h-[39px] w-[141px]" />
      <Callout n={1} className="top-[86px] left-[61px]" />
      <Callout n={2} className="top-[133px] left-[63px]" />
      <Callout n={3} className="top-[171px] left-[64px]" />
      <Callout n={4} className="top-[96px] left-[473px]" />
      <Callout n={5} className="top-[326px] left-[463px]" />
    </div>
  )
}

export default function App() {
  return (
    <div className="h-screen overflow-hidden bg-white pt-[5px] pr-2 pb-[9px] pl-[5px]">
      <main className="relative flex h-full flex-col bg-white font-['DejaVu_Sans_Condensed','DejaVu_Sans',sans-serif] text-[11px] leading-[14px] shadow-[2px_2px_6px_rgba(0,0,0,0.55)]">
        <Header />
        <div className="flex min-h-0 flex-1 overflow-hidden">
          <ItemsPanel />
          <DetailPanel />
        </div>
        <DuplicateDialog />
      </main>
    </div>
  )
}
